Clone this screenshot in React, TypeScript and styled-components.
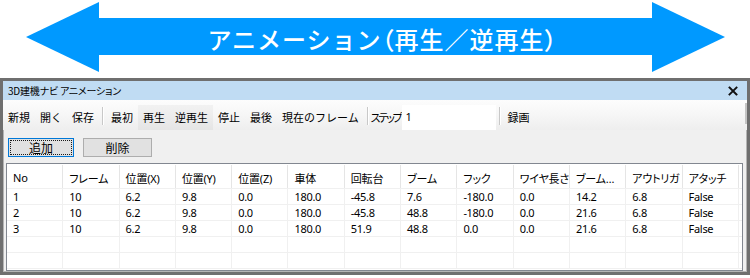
import React from 'react';
import styled, { createGlobalStyle } from 'styled-components';

const GlobalStyle = createGlobalStyle`
  html, body {
    margin: 0;
    padding: 0;
    background: #ffffff;
  }
  body {
    width: 750px;
    height: 278px;
    overflow: hidden;
    font-family: 'Noto Sans', 'Noto Sans CJK JP', sans-serif;
  }
`;

const columns = [
  'No', 'フレーム', '位置(X)', '位置(Y)', '位置(Z)', '車体', '回転台',
  'ブーム', 'フック', 'ワイヤ長さ', 'ブーム…', 'アウトリガ', 'アタッチ',
];

const rows = [
  ['1', '10', '6.2', '9.8', '0.0', '180.0', '-45.8', '7.6', '-180.0', '0.0', '14.2', '6.8', 'False'],
  ['2', '10', '6.2', '9.8', '0.0', '180.0', '-45.8', '48.8', '-180.0', '0.0', '21.6', '6.8', 'False'],
  ['3', '10', '6.2', '9.8', '0.0', '180.0', '51.9', '48.8', '0.0', '0.0', '21.6', '6.8', 'False'],
  [],
  [],
];

type ToolItem = { label: string; hover?: boolean } | 'sep' | 'step';

const toolItems: ToolItem[] = [
  { label: '新規' },
  { label: '開く' },
  { label: '保存' },
  'sep',
  { label: '最初' },
  { label: '再生', hover: true },
  { label: '逆再生', hover: true },
  { label: '停止' },
  { label: '最後' },
  { label: '現在のフレーム' },
  'sep',
  'step',
  'sep',
  { label: '録画' },
];

const App = () => {
  return (
    <>
      <GlobalStyle />
      <Banner>
        <ArrowHead side="left" />
        <Shaft>
          アニメーション<Paren>（</Paren>再生／逆再生<Paren>）</Paren>
        </Shaft>
        <ArrowHead side="right" />
      </Banner>

      <Window>
        <TitleBar>
          <span>3D建機ナビ アニメーション</span>
          <CloseIcon viewBox="0 0 10 10">
            <path d="M1.5 1.5 L8.5 8.5 M8.5 1.5 L1.5 8.5" stroke="#111" strokeWidth="1.9" strokeLinecap="square" />
          </CloseIcon>
        </TitleBar>

        <Toolbar>
          {toolItems.map((item, i) => {
            if (item === 'sep') return <Separator key={i} />;
            if (item === 'step')
              return (
                <React.Fragment key={i}>
                  <ToolLabel>ステップ</ToolLabel>
                  <StepInput>1</StepInput>
                </React.Fragment>
              );
            return (
              <ToolButton key={i} hover={item.hover}>
                {item.label}
              </ToolButton>
            );
          })}
          <Grip />
        </Toolbar>

        <ButtonRow>
          <PushButton focused>
            <FocusRect>追加</FocusRect>
          </PushButton>
          <PushButton>削除</PushButton>
        </ButtonRow>

        <Table>
          <HeaderRow>
            {columns.map((c) => (
              <HeaderCell key={c}>{c}</HeaderCell>
            ))}
          </HeaderRow>
          {rows.map((r, i) => (
            <Row key={i}>
              {columns.map((_, j) => (
                <Cell key={j}>{r[j] ?? ''}</Cell>
              ))}
            </Row>
          ))}
        </Table>
      </Window>
    </>
  );
};

const blue = '#0099ff';

const Banner = styled.div`
  height: 78px;
  padding: 0 25px 0 26px;
  display: flex;
  align-items: flex-start;
  box-sizing: border-box;
`;

const ArrowHead = styled.div<{ side: 'left' | 'right' }>`
  width: 73px;
  height: 70px;
  margin-top: 2px;
  flex-shrink: 0;
  background: ${blue};
  clip-path: ${(p) =>
    p.side === 'left'
      ? 'polygon(0 50%, 100% 0, 100% 100%)'
      : 'polygon(0 0, 100% 50%, 0 100%)'};
`;

const Shaft = styled.div`
  flex: 1;
  height: 37px;
  margin-top: 18px;
  background: ${blue};
  color: #ffffff;
  display: flex;
  align-items: center;
  justify-content: center;
  padding-left: 14px;
  padding-top: 4px;
  box-sizing: border-box;
  font-family: 'Noto Sans CJK JP', sans-serif;
  font-weight: 500;
  font-size: 24px;
  letter-spacing: 1px;
  white-space: nowrap;
`;

const Paren = styled.span`
  font-feature-settings: 'palt';
`;

const Window = styled.div`
  width: 750px;
  height: 197px;
  box-sizing: border-box;
  border: 3px solid #6f6f6f;
  box-shadow: inset 0 0 0 1px #b4b4b4;
  background: #f0f0f0;
  display: flex;
  flex-direction: column;
  font-family: 'Noto Sans', 'Noto Sans CJK JP', sans-serif;
  color: #000;
`;

const TitleBar = styled.div`
  height: 19px;
  flex-shrink: 0;
  background: #c0dcf3;
  display: flex;
  align-items: center;
  justify-content: space-between;
  padding: 0 9px 0 5px;
  font-family: 'Noto Sans CJK JP', sans-serif;
  font-size: 10px;
  font-feature-settings: 'palt';
  letter-spacing: -0.2px;
`;

const CloseIcon = styled.svg`
  width: 10px;
  height: 10px;
`;

const Toolbar = styled.div`
  height: 30px;
  flex-shrink: 0;
  box-sizing: border-box;
  padding: 5px 0 0 0;
  display: flex;
  align-items: stretch;
  background: linear-gradient(#fdfdfd, #f6f6f6 50%, #eeeeee);
  font-family: 'Noto Sans CJK JP', sans-serif;
  font-size: 11px;
  position: relative;
`;

const ToolButton = styled.div<{ hover?: boolean }>`
  display: flex;
  align-items: center;
  padding: 0 5px 2px;
  background: ${(p) => (p.hover ? 'rgba(0, 0, 0, 0.035)' : 'transparent')};
`;

const ToolLabel = styled.div`
  display: flex;
  align-items: center;
  padding: 0 1px 2px 0;
  font-feature-settings: 'palt';
  letter-spacing: -2.2px;
`;

const Separator = styled.div`
  width: 1px;
  margin: 2px 3px 5px;
  background: #c8c8c8;
  box-shadow: 1px 0 0 #ffffff;
`;

const StepInput = styled.div`
  width: 94px;
  background: #ffffff;
  display: flex;
  align-items: center;
  padding: 0 0 2px 4px;
  box-sizing: border-box;
  font-family: 'Noto Sans', sans-serif;
  font-size: 11px;
`;

const Grip = styled.div`
  position: absolute;
  right: 0;
  top: 3px;
  bottom: 6px;
  width: 2px;
  background: #c4c4c4;
`;

const ButtonRow = styled.div`
  display: flex;
  gap: 9px;
  padding: 8px 0 6px 5px;
`;

const PushButton = styled.div<{ focused?: boolean }>`
  width: ${(p) => (p.focused ? 66 : 69)}px;
  height: 19px;
  box-sizing: border-box;
  border: 1px solid ${(p) => (p.focused ? '#0078d7' : '#adadad')};
  background: #e1e1e1;
  display: flex;
  align-items: center;
  justify-content: center;
  padding: ${(p) => (p.focused ? '1px' : '0')};
  font-family: 'Noto Sans CJK JP', sans-serif;
  font-size: 12px;
`;

const FocusRect = styled.div`
  flex: 1;
  align-self: stretch;
  border: 1px dotted #1a1a1a;
  display: flex;
  align-items: center;
  justify-content: center;
`;

const Table = styled.div`
  margin: 0 4px 0 3px;
  height: 108px;
  box-sizing: border-box;
  border: 1px solid #828790;
  background: #ffffff;
  padding-top: 1px;
  font-size: 11px;
`;

const HeaderRow = styled.div`
  display: grid;
  grid-template-columns: repeat(13, 56.3px);
  height: 24px;
  border-bottom: 1px solid #f0f0f0;
  box-sizing: border-box;
`;

const HeaderCell = styled.div`
  border-right: 1px solid #e5e5e5;
  padding: 5px 0 0 6px;
  white-space: nowrap;
  overflow: hidden;
  font-family: 'Noto Sans', 'Noto Sans CJK JP', sans-serif;
  font-feature-settings: 'palt';
  font-size: 11px;
  letter-spacing: -0.2px;
`;

const Row = styled.div`
  display: grid;
  grid-template-columns: repeat(13, 56.3px);
  height: 16px;
  border-bottom: 1px solid #f0f0f0;
  box-sizing: border-box;
`;

const Cell = styled.div`
  border-right: 1px solid #f0f0f0;
  padding: 0 0 0 6px;
  line-height: 15px;
  white-space: nowrap;
  letter-spacing: -0.3px;
`;

export default App;
